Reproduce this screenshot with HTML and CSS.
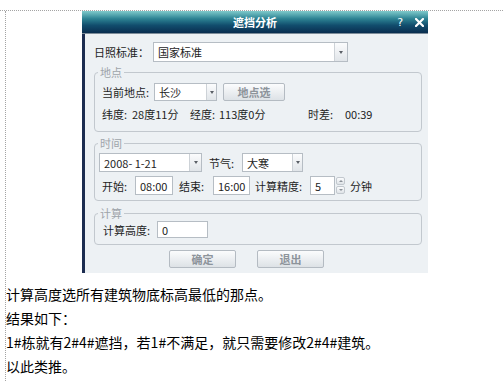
FILE: index.html
```html
<!DOCTYPE html>
<html lang="zh-CN">
<head>
    <meta charset="UTF-8">
    <meta name="viewport" content="width=device-width, initial-scale=1.0">
    <link rel="stylesheet" href="styles.css">
    <title>遮挡分析</title>
</head>
<body>
<div class="page">
  <div class="sheet">
    <div class="dialog">
      <div class="titlebar">
        <span class="title">遮挡分析</span>
        <span class="tb-icons">
          <span class="help">?</span>
          <svg class="close" width="9" height="9" viewBox="0 0 9 9">
            <path d="M1 1 L8 8 M8 1 L1 8" stroke="#fff" stroke-width="2.2" stroke-linecap="square"/>
          </svg>
        </span>
      </div>
      <div class="dlg-body">
        <div class="std-row">
          <span class="lbl lbl-std">日照标准：</span>
          <div class="combo w-std"><span class="val">国家标准</span><span class="drop"></span></div>
        </div>

        <fieldset class="group grp-place">
          <legend>地点</legend>
          <div class="grow">
            <span class="lbl lbl-city">当前地点:</span>
            <div class="combo w-city"><span class="val">长沙</span><span class="drop"></span></div>
            <div class="btn btn-place">地点选</div>
          </div>
          <div class="grow">
            <span class="c-lat">纬度:</span>
            <span class="c-latv">28度11分</span>
            <span class="c-lng">经度:</span>
            <span class="c-lngv">113度0分</span>
            <span class="c-tz">时差:</span>
            <span>00:39</span>
          </div>
        </fieldset>

        <fieldset class="group grp-time">
          <legend>时间</legend>
          <div class="grow row-date">
            <div class="combo w-date"><span class="val">2008- 1-21</span><span class="drop"></span></div>
            <span class="lbl lbl-term">节气:</span>
            <div class="combo w-term"><span class="val">大寒</span><span class="drop"></span></div>
          </div>
          <div class="grow row-range">
            <span class="lbl lbl-start">开始:</span>
            <div class="field w-start">08:00</div>
            <span class="lbl lbl-end">结束:</span>
            <div class="field w-end">16:00</div>
            <span class="lbl lbl-step">计算精度:</span>
            <div class="field w-step">5</div>
            <div class="spin"><span class="up"></span><span class="down"></span></div>
            <span class="unit">分钟</span>
          </div>
        </fieldset>

        <fieldset class="group grp-calc">
          <legend>计算</legend>
          <div class="grow row-calc">
            <span class="lbl lbl-height">计算高度:</span>
            <div class="field w-height">0</div>
          </div>
        </fieldset>

        <div class="buttons">
          <div class="btn btn-main">确定</div>
          <div class="btn btn-main">退出</div>
        </div>
      </div>
    </div>

    <div class="notes">
      <p>计算高度选所有建筑物底标高最低的那点。</p>
      <p>结果如下：</p>
      <p>1#栋就有2#4#遮挡，若1#不满足，就只需要修改2#4#建筑。</p>
      <p>以此类推。</p>
    </div>
  </div>
</div>
</body>
</html>
```

FILE: styles.css
```css
body {
    margin: 0;
    background-color: #fff;
    font-family: "Noto Sans CJK SC", "Noto Sans", sans-serif;
    color: #000;
}
.page {
    margin-top: 10px;
    border-top: 1px dotted #a4a4a4;
    padding-left: 5px;
}
.sheet {
    border-left: 1px dotted #a4a4a4;
    min-height: 370px;
}

/* dialog window */
.dialog {
    margin-left: 76px;
    width: 346px;
    height: 262px;
    display: flex;
    flex-direction: column;
    font-size: 11px;
    color: #1e1e1e;
}
.titlebar {
    height: 22px;
    border-bottom: 1px solid #7d8c99;
    background: linear-gradient(#80cbcc, #2d8393 35%, #114d6d 65%, #0a2d4f);
    display: grid;
    grid-template-columns: 1fr auto 1fr;
    align-items: center;
    color: #fff;
}
.title {
    grid-column: 2;
    font-weight: bold;
    font-size: 11px;
    line-height: 22px;
}
.tb-icons {
    grid-column: 3;
    justify-self: end;
    display: flex;
    align-items: center;
    gap: 12px;
    padding-right: 4px;
}
.help {
    font-family: "DejaVu Sans", sans-serif;
    font-size: 11px;
    line-height: 11px;
}
.close {
    display: block;
}
.dlg-body {
    flex: 1;
    background-color: #edf1f4;
    border-left: 3px solid #1c2c50;
    padding: 8px 6px 0 9px;
    display: flex;
    flex-direction: column;
}

/* rows */
.std-row, .grow {
    display: flex;
    align-items: center;
}
.std-row {
    height: 20px;
}
.lbl-std { width: 59px; }
.lbl-city { width: 52px; }
.lbl-term { width: 33px; margin-left: 7px; }
.lbl-start { width: 33px; }
.lbl-end { width: 34px; margin-left: 6px; }
.lbl-step { width: 55px; margin-left: 5px; }
.lbl-height { width: 54px; }

/* combo boxes */
.combo {
    display: flex;
    box-sizing: border-box;
    background-color: #fff;
    border: 1px solid #b6bdc4;
}
.combo .val {
    flex: 1;
    padding-left: 4px;
    display: flex;
    align-items: center;
}
.combo .drop {
    width: 11px;
    border-left: 1px solid #cdd2d7;
    background: linear-gradient(#fbfcfd, #e1e5e9);
    display: flex;
    align-items: center;
    justify-content: center;
}
.combo .drop::after {
    content: "";
    border-left: 2px solid transparent;
    border-right: 2px solid transparent;
    border-top: 3px solid #5a5f66;
}
.w-std { width: 195px; height: 20px; }
.w-std .drop { width: 12px; }
.w-city { width: 63px; height: 18px; }
.w-city .drop { width: 9px; }
.w-date { width: 103px; height: 19px; }
.w-term { width: 61px; height: 19px; }
.w-term .drop { width: 9px; }

/* text fields */
.field {
    box-sizing: border-box;
    background-color: #fff;
    border: 1px solid #b6bdc4;
    padding-left: 4px;
    display: flex;
    align-items: center;
    color: #222;
}
.w-start { width: 38px; height: 19px; }
.w-end { width: 37px; height: 19px; }
.w-step { width: 25px; height: 19px; }
.w-height { width: 51px; height: 17px; }

.spin {
    width: 9px;
    height: 17px;
    margin-left: 1px;
    display: flex;
    flex-direction: column;
    gap: 1px;
}
.spin span {
    flex: 1;
    box-sizing: border-box;
    border: 1px solid #c2c8ce;
    border-radius: 2px;
    background: linear-gradient(#fbfcfd, #dfe3e7);
    display: flex;
    align-items: center;
    justify-content: center;
}
.spin .up::after {
    content: "";
    border-left: 2px solid transparent;
    border-right: 2px solid transparent;
    border-bottom: 2px solid #8a9097;
}
.spin .down::after {
    content: "";
    border-left: 2px solid transparent;
    border-right: 2px solid transparent;
    border-top: 2px solid #8a9097;
}
.unit { margin-left: 5px; }

/* buttons */
.btn {
    box-sizing: border-box;
    border: 1px solid #b4bbc2;
    border-radius: 2px;
    background: linear-gradient(#fbfcfd, #dde2e6);
    color: #8d949b;
    font-weight: bold;
    display: flex;
    align-items: center;
    justify-content: center;
}
.btn-place {
    width: 62px;
    height: 18px;
    margin-left: 6px;
}
.buttons {
    display: flex;
    gap: 21px;
    margin-top: 5px;
    padding-left: 75px;
}
.btn-main {
    width: 67px;
    height: 18px;
}

/* groups */
.group {
    margin: 0;
    min-width: 0;
    border: 1px solid #c2c8ce;
    border-radius: 4px;
    padding: 0 6px 0 3px;
}
.group legend {
    padding: 0 2px;
    color: #9ea4aa;
    font-size: 11px;
    line-height: 14px;
}
.grp-place {
    margin-top: 3px;
    padding-top: 4px;
    padding-bottom: 8px;
}
.grp-place .grow {
    height: 18px;
    padding-left: 4px;
}
.grp-place .grow + .grow {
    margin-top: 4px;
}
.c-lat { width: 30px; }
.c-latv { width: 58px; }
.c-lng { width: 29px; }
.c-lngv { width: 89px; }
.c-tz { width: 37px; }

.grp-time {
    margin-top: 4px;
    padding-top: 3px;
    padding-bottom: 5px;
}
.row-date { padding-left: 1px; }
.row-range {
    margin-top: 4px;
    padding-left: 4px;
}
.grp-calc {
    margin-top: 5px;
    padding-top: 1px;
    padding-bottom: 6px;
}
.row-calc { padding-left: 5px; }

/* notes below the picture */
.notes {
    margin-top: 9px;
    font-size: 14px;
    line-height: 24px;
}
.notes p {
    margin: 0;
}
```
